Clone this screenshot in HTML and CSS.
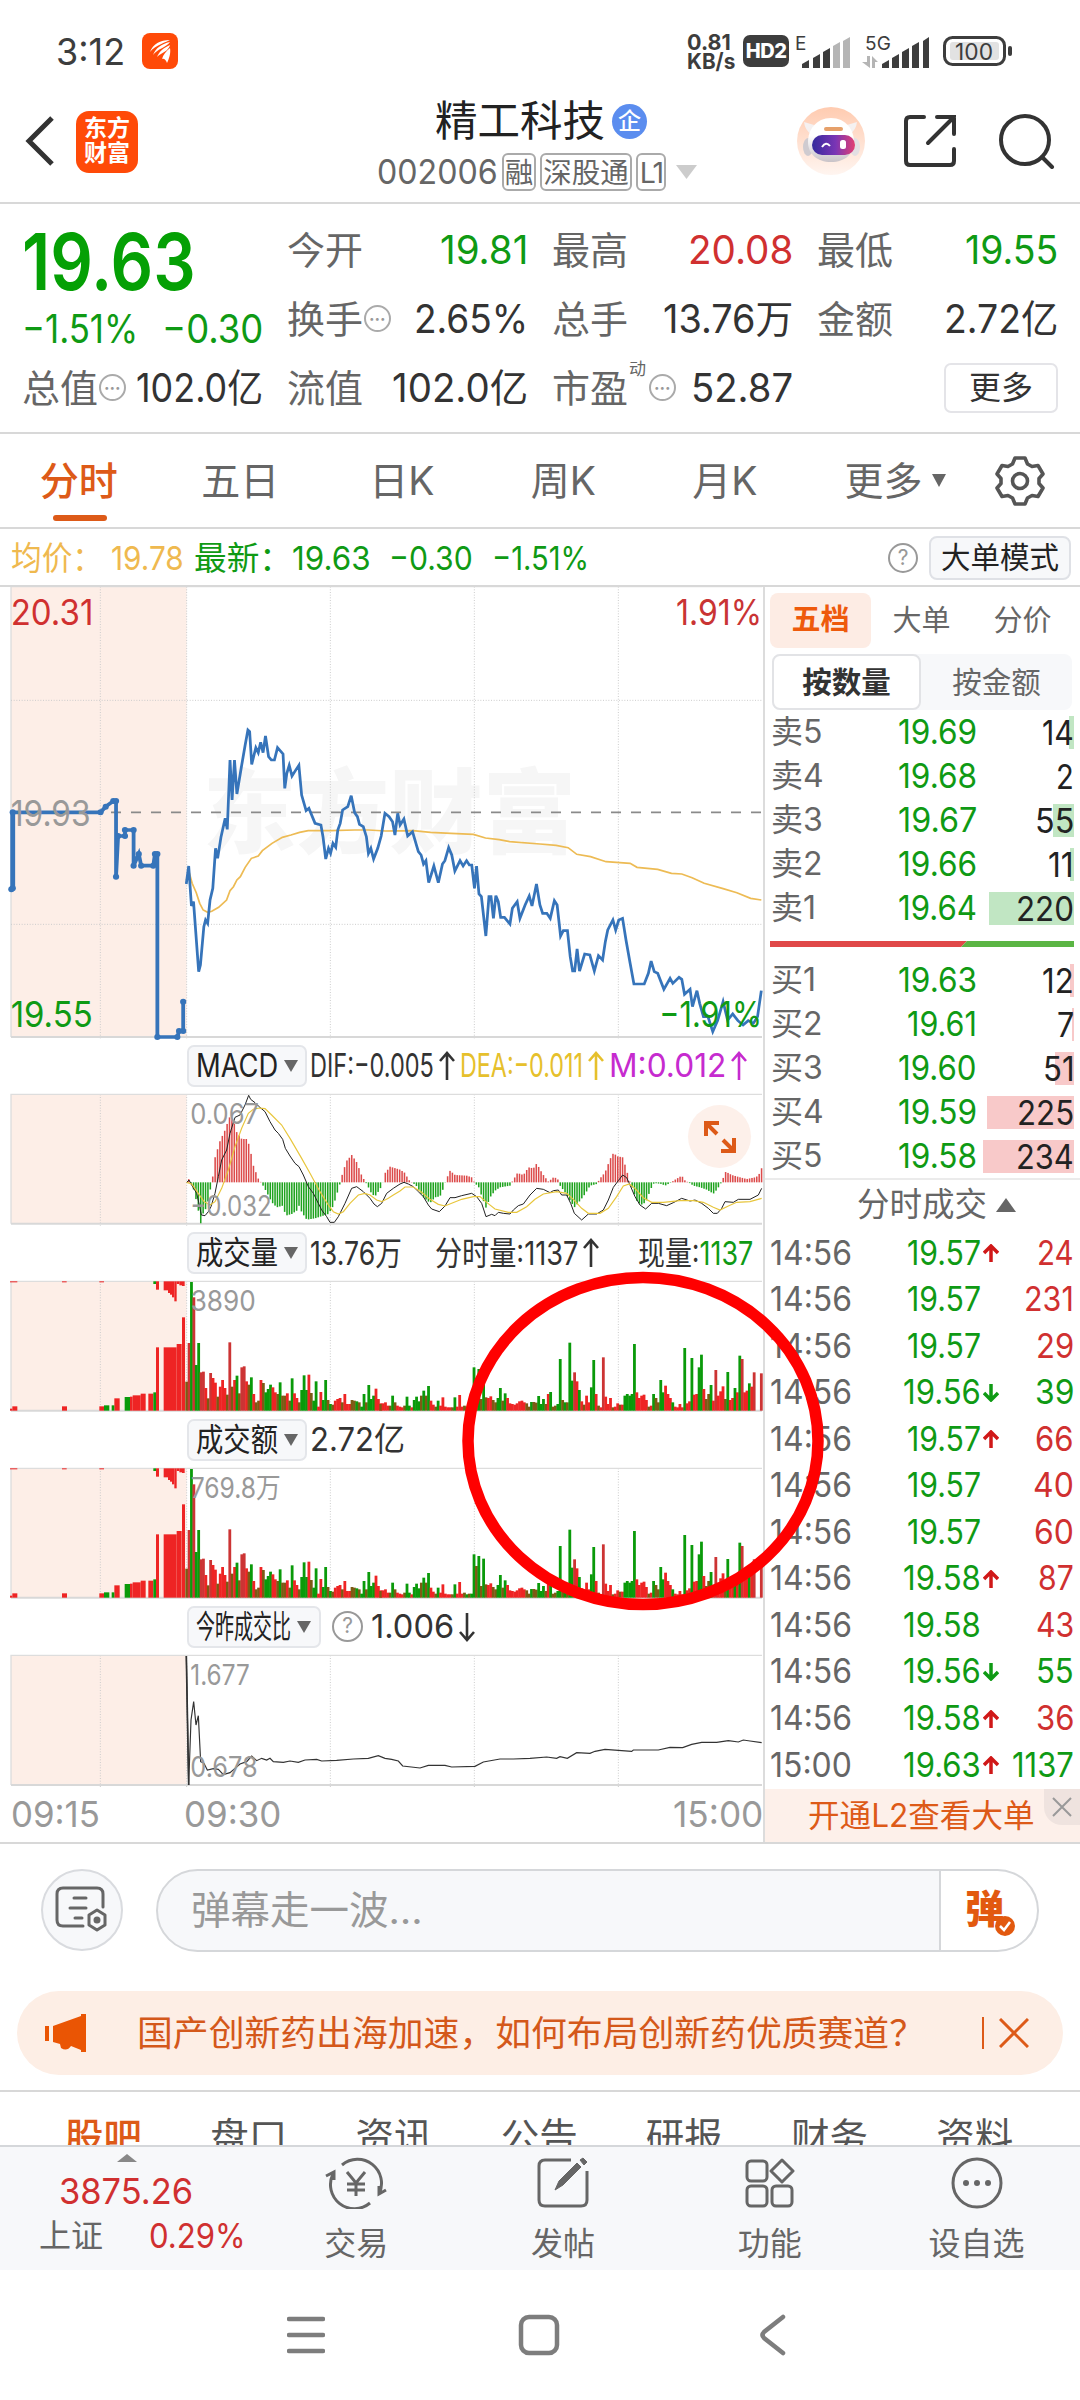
FILE: index.html
```html
<!DOCTYPE html>
<html lang="zh-CN">
<head>
<meta charset="utf-8">
<title>精工科技 002006</title>
<link rel="stylesheet" href="styles.css">
</head>
<body>
<header class="status">
  <span class="clock fit" data-w="69">3:12</span>
  <svg class="app" width="36" height="36" viewBox="0 0 36 36"><rect width="36" height="36" rx="8" fill="#ff4a08"/><path d="M8 19C11 11 18 7 28 7 25 9 13 12 8 19ZM11 22C14 15 19 11 28 9 25 14 15 16 11 22ZM15 24C17 19 21 15 28 12 27 18 19 20 15 24ZM20 26C21 22 24 18 28 15 29 20 27 26 25 30 24 27 22 25 20 26Z" fill="#fff"/></svg>
  <div class="speed"><span class="fit" data-w="44">0.81</span><span class="fit" data-w="48">KB/s</span></div>
  <span class="hd">HD2</span>
  <svg class="signals" width="140" height="44" viewBox="0 0 140 44">
    <text x="0" y="17" font-size="19">E</text><text x="70" y="17" font-size="19" textLength="26">5G</text>
    <g fill="#3d3d3d"><path d="M7 35V31L14 27V35ZM18 35V25L25 21V35ZM28 35V19L35 15V35Z"/><path d="M87 35V31L94 27V35ZM97 35V25L104 21V35ZM107 35V19L114 15V35ZM117 35V13L124 9V35ZM128 35V8L134 4V35Z"/></g>
    <g fill="#b5b5b5"><path d="M38 35V13L45 9V35ZM48 35V8L55 4V35Z"/><path d="M75 35V23H72V29H67L75 35ZM77 35V23L83 29H80V35Z"/></g>
  </svg>
  <svg class="battery" width="70" height="32" viewBox="0 0 70 32"><rect x="1.5" y="1.5" width="60" height="27" rx="8" fill="#fff" stroke="#3d3d3d" stroke-width="3"/><rect x="7" y="6" width="49" height="18" rx="3" fill="#e2e2e2"/><rect x="65" y="10" width="4" height="10" rx="2" fill="#3d3d3d"/><text x="12" y="24" font-size="23" textLength="38" lengthAdjust="spacingAndGlyphs">100</text></svg>
</header>

<nav class="head">
  <svg class="back" width="30" height="52" viewBox="0 0 30 52"><path d="M27 3 4 26 27 49" fill="none" stroke="#333" stroke-width="5"/></svg>
  <div class="logo"><span>东方</span><span>财富</span></div>
  <div class="title">
    <div class="name">精工科技<i>企</i></div>
    <div class="code"><span class="fit" data-w="121">002006</span><b>融</b><b>深股通</b><b>L1</b><svg width="22" height="14" viewBox="0 0 22 14"><path d="M0 0H21L10.500 14Z" fill="#ccc"/></svg></div>
  </div>
  <svg class="robot" width="68" height="68" viewBox="0 0 68 68">
    <defs><linearGradient id="bg" x2="0" y2="1"><stop stop-color="#ffcbb0"/><stop offset="1" stop-color="#fff5f0"/></linearGradient><linearGradient id="visor"><stop stop-color="#342a9c"/><stop offset=".55" stop-color="#7a35b5"/><stop offset="1" stop-color="#e33f72"/></linearGradient><linearGradient id="shell" x2="0" y2="1"><stop offset=".4" stop-color="#fff"/><stop offset="1" stop-color="#c9c3c8"/></linearGradient></defs>
    <circle cx="34" cy="34" r="34" fill="url(#bg)"/><path d="M7 15 17 18 14 27Q8 23 7 15ZM60 15 50 18 53 27Q59 23 60 15Z" fill="#f5f1f1"/>
    <ellipse cx="11" cy="40" rx="5" ry="9" fill="#cfcbd0"/><ellipse cx="58" cy="40" rx="5" ry="9" fill="#e3dfe3"/>
    <path d="M34 11C49 11 57 23 57 35S48 55 34 55 11 47 11 35 19 11 34 11Z" fill="url(#shell)"/>
    <rect x="27" y="20" width="19" height="4" rx="2" fill="#e6a06a"/><rect x="15" y="28" width="43" height="20" rx="10" fill="url(#visor)"/>
    <path d="M25 40Q29 34 33 39" fill="none" stroke="#fff" stroke-width="2"/><rect x="43" y="33" width="6" height="9" rx="2.500" fill="#fff"/>
  </svg>
  <svg class="share" width="54" height="54" viewBox="0 0 54 54" fill="none" stroke="#333" stroke-width="4" stroke-linecap="round"><path d="M21 3H7Q3 3 3 7V47Q3 51 7 51H47Q51 51 51 47V35M34 3H51V20M51 3 25 29"/></svg>
  <svg class="search" width="56" height="56" viewBox="0 0 56 56" fill="none" stroke="#333" stroke-width="4" stroke-linecap="round"><circle cx="26" cy="27" r="24"/><path d="M43 44 53 54"/></svg>
</nav>

<section class="stats">
  <div class="big"><span class="fit" data-w="174">19.63</span></div>
  <div class="cell"><label>今开</label><span class="fit dn" data-w="88">19.81</span></div>
  <div class="cell"><label>最高</label><span class="fit rd" data-w="105">20.08</span></div>
  <div class="cell"><label>最低</label><span class="fit dn" data-w="93">19.55</span></div>
  <div class="cell chg dn"><span class="fit" data-w="116">−1.51%</span><span class="fit" data-w="101">−0.30</span></div>
  <div class="cell"><label>换手<i class="dots">•••</i></label><span class="fit" data-w="114">2.65%</span></div>
  <div class="cell"><label>总手</label><span class="fit" data-w="130">13.76万</span></div>
  <div class="cell"><label>金额</label><span class="fit" data-w="114">2.72亿</span></div>
  <div class="cell"><label>总值<i class="dots">•••</i></label><span class="fit" data-w="127">102.0亿</span></div>
  <div class="cell"><label>流值</label><span class="fit" data-w="136">102.0亿</span></div>
  <div class="cell"><label>市盈<sup>动</sup><i class="dots">•••</i></label><span class="fit" data-w="102">52.87</span></div>
  <div class="cell last"><button>更多</button></div>
</section>

<nav class="periods">
  <span class="on">分时</span><span>五日</span><span>日K</span><span>周K</span><span>月K</span>
  <span class="more">更多<svg width="14" height="13" viewBox="0 0 14 13"><path d="M0 0H14L7 13Z" fill="#666"/></svg></span>
  <svg class="gear" width="50" height="52" viewBox="0 0 50 52" fill="none" stroke="#555" stroke-width="3.600" stroke-linejoin="round"><path d="M20 3H30L32.500 9 37 11.500 43 10.500 48 19 44 23.500V28.500L48 33 43 41.500 37 40.500 32.500 43 30 49H20L17.500 43 13 40.500 7 41.500 2 33 6 28.500V23.500L2 19 7 10.500 13 11.500 17.500 9Z"/><circle cx="25" cy="26" r="7.500"/></svg>
</nav>

<div class="quote">
  <span class="fit avg" data-w="92">均价：</span><span class="fit avg" data-w="73">19.78</span>
  <span class="fit dn latest" data-w="98">最新：</span><span class="fit dn p1" data-w="79">19.63</span><span class="fit dn" data-w="84">−0.30</span><span class="fit dn" data-w="97">−1.51%</span>
  <i class="help">?</i><button>大单模式</button>
</div>

<main class="board">
  <div class="charts">
    <svg id="price" class="plot" width="763" height="454" viewBox="0 0 2289 1362"></svg>
    <div class="ind r1"><button><span class="fit" data-w="82">MACD</span><em></em></button>
      <span class="fit" data-w="124">DIF:−0.005</span><svg class="ar" viewBox="0 0 16 30"><path d="M8 29V2M1 10 8 2 15 10"/></svg>
      <span class="fit yl" data-w="123">DEA:−0.011</span><svg class="ar yl" viewBox="0 0 16 30"><path d="M8 29V2M1 10 8 2 15 10"/></svg>
      <span class="fit mg" data-w="117">M:0.012</span><svg class="ar mg" viewBox="0 0 16 30"><path d="M8 29V2M1 10 8 2 15 10"/></svg></div>
    <svg id="macd" class="plot" width="763" height="133" viewBox="0 0 2289 399"></svg>
    <div class="ind r2"><button><span class="fit" data-w="82">成交量</span><em></em></button>
      <span class="fit" data-w="92">13.76万</span><span class="fit mid" data-w="143">分时量:1137</span><svg class="ar" viewBox="0 0 16 30"><path d="M8 29V2M1 10 8 2 15 10"/></svg>
      <span class="fit now" data-w="115">现量:<u>1137</u></span></div>
    <svg id="volume" class="plot" width="763" height="132" viewBox="0 0 2289 396"></svg>
    <div class="ind r3"><button><span class="fit" data-w="82">成交额</span><em></em></button><span class="fit" data-w="95">2.72亿</span></div>
    <svg id="amount" class="plot" width="763" height="132" viewBox="0 0 2289 396"></svg>
    <div class="ind r3"><button class="wide"><span class="fit" data-w="95">今昨成交比</span><em></em></button><i class="help">?</i><span class="fit" data-w="83">1.006</span><svg class="ar" viewBox="0 0 16 30"><path d="M8 1V28M1 20 8 28 15 20"/></svg></div>
    <svg id="ratio" class="plot" width="763" height="133" viewBox="0 0 2289 399"></svg>
    <div class="axis"><span class="fit" data-w="89">09:15</span><span class="fit" data-w="97">09:30</span><span class="fit end" data-w="90">15:00</span></div>
    <div class="expand"><svg width="32" height="32" viewBox="0 0 32 32" fill="none" stroke="#dd5a18" stroke-width="4"><path d="M2 15V2H15M3 3 13 13M30 17V30H17M29 29 19 19"/></svg></div>
  </div>

  <aside class="book">
    <div class="tabs"><b>五档</b><span>大单</span><span>分价</span></div>
    <div class="seg"><b>按数量</b><span>按金额</span></div>
    <div id="asks"></div>
    <svg class="ratio-bar" width="304" height="6" viewBox="0 0 304 6"><path d="M0 0H197L191 6H0Z" fill="#e04848"/><path d="M197 0H304V6H191Z" fill="#5bb544"/></svg>
    <div id="bids"></div>
    <div class="deals-head">分时成交<svg width="20" height="14" viewBox="0 0 20 14"><path d="M0 14 10 0 20 14Z" fill="#666"/></svg></div>
    <div id="deals"></div>
    <div class="promo"><span class="fit" data-w="227">开通L2查看大单</span><i><svg width="20" height="20" viewBox="0 0 20 20"><path d="M1 1 19 19M19 1 1 19" stroke="#999" stroke-width="2"/></svg></i></div>
  </aside>
  <svg class="mark" width="362" height="340" viewBox="0 0 362 340"><ellipse cx="181" cy="170" rx="175" ry="163.500" fill="none" stroke="#f00" stroke-width="11.500"/></svg>
</main>

<div class="chat">
  <div class="round"><svg width="54" height="50" viewBox="0 0 54 50" fill="none" stroke="#666" stroke-width="3" stroke-linecap="round"><path d="M48 22V9Q48 3 42 3H8Q2 3 2 9V35Q2 41 8 41H28M19 13H31M15 23H31M20 33H27"/><path d="M42 25 50 30V40L42 45 34 40V30Z" stroke-linejoin="round"/><circle cx="42" cy="35" r="2" fill="#666"/></svg></div>
  <div class="input"><span class="fit" data-w="232">弹幕走一波…</span></div>
  <div class="send">弹<svg width="20" height="20" viewBox="0 0 20 20"><circle cx="10" cy="10" r="10" fill="#e2590f"/><path d="M5 10 9 14 15 6" fill="none" stroke="#fff" stroke-width="2.500"/></svg></div>
</div>

<div class="notice">
  <svg width="42" height="38" viewBox="0 0 42 38" fill="#ea5504"><path d="M0 12H4V27H0ZM8 12 36 2V0H41V38H36V36L26 32Q22 38 16 34L15 30 8 28Z"/></svg>
  <span class="fit" data-w="788">国产创新药出海加速，如何布局创新药优质赛道？</span>
  <em></em><svg class="x" width="30" height="30" viewBox="0 0 30 30"><path d="M1 1 29 29M29 1 1 29" stroke="#dd5a18" stroke-width="3"/></svg>
</div>

<nav class="sub"><b>股吧</b><span>盘口</span><span>资讯</span><span>公告</span><span>研报</span><span>财务</span><span>资料</span></nav>

<footer class="bar">
  <div class="index"><svg width="20" height="8" viewBox="0 0 20 8"><path d="M0 8 10 0 20 8Z" fill="#888"/></svg><span class="fit rd" data-w="134">3875.26</span><div><label>上证</label><span class="fit rd" data-w="97">0.29%</span></div></div>
  <div class="act"><svg width="62" height="52" viewBox="0 0 62 52"><path d="M17 8A24 24 0 0 1 54 37M45 46A24 24 0 0 1 8 17M1 19 9 15V23M61 33 54 37V29M22 15 31 26 40 15M31 26V39M22 27H40M22 33H40"/></svg>交易</div>
  <div class="act"><svg width="52" height="52" viewBox="0 0 52 52"><path d="M34 3H8Q2 3 2 9V43Q2 49 8 49H44Q50 49 50 43V14"/><path d="M18 33 22 24 40 6 44 10 26 28ZM43 3 46 1 50 5 47 8Z" fill="#666" stroke-width="1"/></svg>发帖</div>
  <div class="act"><svg width="50" height="52" viewBox="0 0 50 52"><rect x="2" y="4" width="20" height="20" rx="4"/><path d="M37 3 48 14 37 25 26 14Z" stroke-linejoin="round"/><rect x="2" y="29" width="20" height="20" rx="4"/><rect x="27" y="29" width="20" height="20" rx="4"/></svg>功能</div>
  <div class="act"><svg width="52" height="52" viewBox="0 0 52 52"><circle cx="26" cy="26" r="24"/><g fill="#666" stroke="none"><circle cx="15" cy="26" r="3"/><circle cx="26" cy="26" r="3"/><circle cx="37" cy="26" r="3"/></g></svg>设自选</div>
</footer>

<div class="system">
  <svg width="38" height="38" viewBox="0 0 38 38"><path d="M2 3H36M2 19H36M2 35H36" stroke-width="4.500" stroke-linecap="round"/></svg>
  <svg width="42" height="42" viewBox="0 0 42 42"><rect x="3" y="3" width="36" height="36" rx="8" stroke-width="4.500"/></svg>
  <svg width="30" height="42" viewBox="0 0 30 42"><path d="M25 3 6 18Q3 21 6 24L25 39" stroke-width="4.500" stroke-linecap="round"/></svg>
</div>
<script src="script.js"></script>
</body>
</html>
```
FILE: styles.css
```css
* { box-sizing: border-box; }
body { margin: 0; width: 1080px; height: 2400px; overflow: hidden; background: #fff; color: #333; font: 400 38px/1 Inter, "Noto Sans CJK SC", sans-serif; }
i, em, u { font-style: normal; text-decoration: none; }
button { font: inherit; line-height: 1; color: inherit; padding: 0; }
svg { display: block; flex: none; }
.fit { display: inline-block; flex: none; white-space: nowrap; transform-origin: 0 50%; }
.dn { color: #0f9a14; }
.rd { color: #d03030; }

.status { height: 102px; padding-left: 56px; display: flex; align-items: center; color: #3d3d3d; }
.clock { font-size: 37px; }
.app { margin-left: 17px; }
.speed { margin-left: 509px; width: 56px; display: flex; flex-direction: column; font-weight: 700; font-size: 22px; line-height: 19px; padding-top: 2px; align-items: flex-start; }
.hd { width: 46px; height: 32px; border-radius: 7px; background: #3d3d3d; color: #fff; font-weight: 800; font-size: 20px; line-height: 32px; text-align: center; letter-spacing: -.5px; }
.signals { margin-left: 6px; margin-top: 7px; fill: #3d3d3d; }
.battery { margin-left: 8px; margin-top: 1px; fill: #3d3d3d; }

.head { height: 102px; border-bottom: 2px solid #d8d8d8; display: flex; padding-left: 25px; }
.back { margin-top: 13px; }
.logo { margin: 9px 0 0 21px; width: 62px; height: 62px; border-radius: 13px; background: #ff4a08; color: #fff; font-weight: 700; font-size: 23px; line-height: 25px; padding-top: 5px; display: flex; flex-direction: column; align-items: center; }
.title { width: 667px; padding-left: 239px; flex: none; }
.name { display: flex; align-items: center; height: 38px; padding-left: 58px; font-size: 42.500px; color: #222; }
.name i { width: 35px; height: 35px; margin-left: 7px; border-radius: 50%; background: #5b8def; color: #fff; font-size: 23px; line-height: 34px; text-align: center; font-weight: 500; }
.code { display: flex; align-items: center; height: 40px; margin-top: 12px; font-size: 34px; color: #666; }
.code b { font-weight: 400; font-size: 28.500px; height: 38px; line-height: 35px; border: 2px solid #aaa; border-radius: 6px; margin-left: 4px; padding: 0 1px; }
.code b:nth-of-type(3) { letter-spacing: -2px; padding: 0 2px; }
.code svg { margin-left: 10px; }
.robot { margin-top: 5px; margin-left: -8px; }
.share { margin: 12px 0 0 38px; }
.search { margin: 11px 0 0 42px; }

.stats { height: 230px; border-bottom: 2px solid #d8d8d8; padding: 11px 0 0 22px; display: grid; grid-template-columns: 241px 241px 241px 241px; column-gap: 24px; grid-template-rows: 69px 69px 69px; }
.big { font-size: 79px; font-weight: 600; color: #05a005; line-height: 69px; padding-top: 12px; }
.cell { display: flex; align-items: center; justify-content: space-between; font-size: 39px; }
.cell label { color: #666; font-size: 38px; display: flex; align-items: center; }
.chg { padding-top: 20px; }
.dots { width: 27px; height: 27px; border: 2px solid #aaa; border-radius: 50%; color: #999; font-size: 9px; line-height: 23px; text-align: center; margin-left: 1px; letter-spacing: .5px; }
.cell sup { font-size: 17px; align-self: flex-start; margin: -8px 0 0 1px; width: 17px; }
.cell sup + .dots { margin-left: 3px; }
.last { justify-content: flex-end; }
.last button { width: 114px; height: 50px; border: 2px solid #e4e4e8; border-radius: 7px; background: #fff; font-size: 32px; }

.periods { height: 95px; border-bottom: 2px solid #d8d8d8; display: flex; align-items: center; position: relative; font-size: 39px; color: #666; }
.periods span { width: 161.500px; white-space: nowrap; text-align: center; }
.periods .more { display: flex; align-items: center; gap: 9px; width: 150px; margin-left: 39px; }
.periods .on { color: #dd5a18; font-weight: 500; margin-left: -2px; }
.periods .on::after { content: ""; position: absolute; left: 53px; bottom: 6px; width: 54px; height: 6px; border-radius: 3px; background: #dd5a18; }

.quote { height: 58px; border-bottom: 2px solid #d8d8d8; display: flex; align-items: center; padding: 2px 9px 0 11px; font-size: 33px; }
.avg { color: #efb94f; }
.avg + .avg { margin-left: 8px; }
.latest { margin-left: 10px; }
.p1 { margin-left: 0; }
.p1 ~ .dn { margin-left: 19px; }
.help { width: 30px; height: 30px; flex: none; border: 2.500px solid #999; border-radius: 50%; color: #999; font-size: 21px; line-height: 26px; text-align: center; }
.quote .help { margin-left: auto; }
.quote button { margin-left: 11px; width: 142px; height: 44px; border: 2px solid #dfe1e6; border-radius: 8px; background: #f7f8fa; font-size: 29.500px; color: #222; }

.board { height: 1257px; border-bottom: 2px solid #d8d8d8; display: grid; grid-template-columns: 763px 317px; position: relative; }
.charts { position: relative; }
.plot { font-family: Inter, "Noto Sans CJK SC", sans-serif; }
.ind { display: flex; align-items: center; padding-left: 187px; font-size: 33px; }
.ind button { width: 120px; height: 42px; margin-right: 3px; padding-left: 7px; border: 2px solid #e4e6ea; border-radius: 7px; background: #f7f8fa; color: #222; font-size: 32px; display: flex; align-items: center; }
.ind button.wide { width: 134px; }
.ind em { margin-left: 6px; border: 7px solid transparent; border-top: 12px solid #666; border-bottom: 0; }
.ind .ar { width: 16px; height: 30px; margin: 0 5px; fill: none; stroke: #333; stroke-width: 2.600; }
.yl { color: #e6c02c; } .ind .ar.yl { stroke: #e6c02c; }
.mg { color: #c62bcf; } .ind .ar.mg { stroke: #c62bcf; }
.r1 { height: 52px; padding-bottom: 3px; }
.r2 { height: 54px; }
.mid { margin-left: 33px; }
.now { margin-left: 34px; }
.now u { color: #0f9a14; }
.r3 { height: 55px; }
.ind .help { margin: 0 8px; width: 31px; height: 31px; }
.axis { height: 54px; display: flex; align-items: center; padding-left: 11px; color: #999; font-size: 36px; }
.axis .fit + .fit { margin-left: 84px; }
.axis .fit.end { margin-left: auto; }
.expand { position: absolute; left: 688px; top: 518px; width: 63px; height: 63px; border-radius: 50%; background: #fdf0ea; display: flex; align-items: center; justify-content: center; }
.mark { position: absolute; left: 462px; top: 684px; }

.book { border-left: 2px solid #dcdcdc; padding-top: 6px; }
.tabs { height: 55px; margin-left: 5px; display: flex; align-items: center; font-size: 29px; color: #666; }
.tabs b { width: 101px; height: 55px; line-height: 54px; border-radius: 8px; background: #fdece4; color: #ee5a0c; font-weight: 700; text-align: center; }
.tabs span { width: 101px; text-align: center; }
.seg { height: 56px; width: 300px; margin: 6px 0 0 7px; background: #f7f8fa; border-radius: 8px; display: flex; font-size: 29.500px; line-height: 52px; text-align: center; color: #666; }
.seg b { width: 149px; border: 2px solid #e2e3e6; border-radius: 8px; background: #fff; color: #333; font-weight: 700; }
.seg span { flex: 1; line-height: 56px; }
.level { height: 44px; display: flex; align-items: center; justify-content: flex-end; padding: 0 6px 0 6px; font-size: 34px; color: #222; }
.level label { color: #666; font-size: 32px; margin-right: auto; }
.level .qty { width: 97px; height: 33px; line-height: 33px; text-align: right; }
.ratio-bar { margin: 11px 0 11px 5px; }
.deals-head { height: 52px; border-top: 2px solid #ebebeb; padding-left: 92px; display: flex; align-items: center; gap: 9px; font-size: 32.500px; color: #666; }
.deal { height: 46.550px; display: flex; align-items: center; padding: 0 6px 0 5px; font-size: 33.500px; }
.deal .t { color: #666; }
.deal .dn.p { margin-left: auto; }
.deal svg { width: 16px; height: 18px; margin-left: 2px; fill: none; stroke-width: 3.500; }
.deal .q { width: 75px; display: flex; justify-content: flex-end; }
.promo { position: absolute; right: 0; bottom: 0; width: 315px; height: 53px; background: #fdf0ea; color: #dd5a18; font-size: 32px; display: flex; align-items: center; padding-left: 43px; }
.promo i { position: absolute; right: 0; top: 0; width: 36px; height: 36px; border-bottom-left-radius: 18px; background: #efe3df; display: flex; align-items: center; justify-content: center; }

.chat { padding: 25px 41px 0; height: 147px; display: flex; align-items: flex-start; }
.round { width: 82px; height: 82px; border: 2px solid #d9dbdf; border-radius: 50%; background: #f7f8fa; display: flex; align-items: center; justify-content: center; }
.input { width: 785px; height: 83px; margin-left: 33px; border: 2px solid #d5d7da; border-radius: 42px 0 0 42px; background: #f7f8fa; color: #999; font-size: 38.500px; line-height: 79px; padding-left: 33px; }
.send { width: 98px; height: 83px; border: 2px solid #d5d7da; border-left: 0; border-radius: 0 42px 42px 0; color: #e2590f; font-weight: 900; font-size: 39px; line-height: 76px; padding-left: 24px; position: relative; }
.send svg { position: absolute; right: 22px; top: 45px; }
.notice { margin: 0 17px 15px; height: 84px; border-radius: 42px; background: #fdeee5; color: #d4581a; font-size: 35px; display: flex; align-items: center; padding-left: 28px; }
.notice .fit { margin-left: 50px; }
.notice em { width: 2px; height: 32px; background: #dd5a18; margin-left: 57px; }
.notice .x { margin-left: 15px; }
.sub { border-top: 2px solid #d8d8d8; height: 55px; overflow: hidden; display: flex; padding: 26px 31px 0; font-size: 38.500px; color: #555; }
.sub b { color: #dd5a18; font-weight: 500; }
.sub > * { width: 145.200px; text-align: center; flex: none; }

.bar { height: 125px; border-top: 2px solid #d5d7da; background: #f7f8fa; display: flex; font-size: 32px; color: #666; }
.index { width: 253px; flex: none; padding-top: 7px; display: flex; flex-direction: column; align-items: center; font-size: 36px; }
.index > .fit { margin-top: 11px; }
.index div { display: flex; align-items: center; gap: 46px; margin: 10px 0 0 39px; font-size: 34px; align-self: flex-start; white-space: nowrap; }
.index label { font-size: 32px; }
.act { width: 206.800px; display: flex; flex-direction: column; align-items: center; padding-top: 10px; gap: 19px; white-space: nowrap; }
.act svg { fill: none; stroke: #666; stroke-width: 3; }
.system { height: 130px; display: flex; align-items: center; padding-left: 287px; stroke: #7d7d7d; }
.system svg { fill: none; }
.system svg:nth-child(2) { margin-left: 193px; }
.system svg:nth-child(3) { margin-left: 198px; }
```
FILE: script.js
```js
/* Squeeze or stretch labels to their column width */
function fitAll() {
  document.querySelectorAll('.fit').forEach(el => {
    const natural = el.offsetWidth, w = +el.dataset.w;
    el.style.transform = `scaleX(${w / natural})`;
    el.style.marginRight = `${w - natural}px`;
  });
}

/* Order book */
const asks = [['卖5','19.69',14,5],['卖4','19.68',2,0],['卖3','19.67',55,21],['卖2','19.66',11,4],['卖1','19.64',220,85]];
const bids = [['买1','19.63',12,4],['买2','19.61',7,2],['买3','19.60',51,19],['买4','19.59',225,87],['买5','19.58',234,91]];
const qtyWidth = {14:32, 2:18, 55:39, 11:26, 220:58, 12:32, 7:17, 51:32, 225:57, 234:58};
const level = color => ([n, p, q, w]) =>
  `<div class="level"><label>${n}</label><span class="fit dn" data-w="${p === '19.61' ? 70 : 79}">${p}</span><span class="qty" style="background:linear-gradient(${color},${color}) right/${w}px 100% no-repeat"><span class="fit" data-w="${qtyWidth[q]}">${q}</span></span></div>`;
document.getElementById('asks').innerHTML = asks.map(level('#c1e6c3')).join('');
document.getElementById('bids').innerHTML = bids.map(level('#f8c9c9')).join('');

/* Deals: time, price, direction, quantity, colour, quantity width */
const deals = [['14:56','19.57','u',24,'rd',37],['14:56','19.57','',231,'rd',50],['14:56','19.57','',29,'rd',38],['14:56','19.56','d',39,'dn',39],['14:56','19.57','u',66,'rd',39],['14:56','19.57','',40,'rd',41],['14:56','19.57','',60,'rd',40],['14:56','19.58','u',87,'rd',36],['14:56','19.58','',43,'rd',38],['14:56','19.56','d',55,'dn',38],['14:56','19.58','u',36,'rd',38],['15:00','19.63','u',1137,'dn',62]];
const arrows = {u: '<path d="M8 18V2M1 9 8 2 15 9" stroke="#d01818"/>', d: '<path d="M8 0V16M1 9 8 16 15 9" stroke="#0f9a14"/>', '': ''};
document.getElementById('deals').innerHTML = deals.map(([t, p, a, q, c, w]) =>
  `<div class="deal"><span class="fit t" data-w="82">${t}</span><span class="fit dn p" data-w="${p === '19.57' ? 74 : 78}">${p}</span><svg viewBox="0 0 16 18">${arrows[a]}</svg><span class="q ${c}"><span class="fit" data-w="${w}">${q}</span></span></div>`).join('');

/* Charts. Units are thirds of a pixel. */
const L = 33, R = 2286, OPEN = 560, COLS = [301, 560, 991, 1423, 1855];
const line = (pts, c, w, extra = '') => `<polyline points="${pts}" fill="none" stroke="${c}" stroke-width="${w}" ${extra}/>`;
const rect = (x, y, w, h, c) => `<rect x="${x}" y="${y}" width="${w}" height="${h}" fill="${c}"/>`;
const label = (x, y, size, c, s, w) => `<text x="${x}" y="${y}" font-size="${size}" fill="${c}" textLength="${w}" lengthAdjust="spacingAndGlyphs">${s}</text>`;
function frame(top, bottom) {
  return rect(L, top, OPEN - L, bottom - top, '#fdeee7') +
    COLS.map(x => line(`${x},${top} ${x},${bottom + 6}`, '#ccc', 3, 'stroke-dasharray="3 5"')).join('') +
    line(`${L},${bottom} ${L},${top} ${R},${top}`, '#ddd', 4) + line(`${L},${bottom} ${R},${bottom}`, '#d8d8d8', 6);
}

const priceLine = '541,912 548,858 556,978 562,965 577,1175 582,1155 592,1040 597,1020 603,1030 610,960 618,925 626,805 632,835 642,770 654,715 660,748 668,540 674,660 681,540 688,642 702,555 712,495 720,450 725,455 731,553 743,503 750,518 757,487 764,518 771,468 780,530 788,540 797,540 806,503 822,522 827,625 833,580 840,556 848,588 856,575 868,556 876,645 889,692 897,685 915,730 932,735 938,770 946,837 954,805 960,820 967,790 975,802 981,750 988,730 995,690 1010,680 1020,647 1030,698 1038,710 1044,733 1055,740 1064,770 1070,820 1077,805 1085,837 1097,805 1107,768 1118,700 1130,710 1140,725 1147,765 1155,700 1162,735 1173,717 1184,768 1198,755 1215,815 1223,825 1230,852 1237,842 1245,908 1260,858 1273,908 1285,852 1292,842 1303,803 1312,825 1321,873 1336,842 1345,858 1355,842 1363,855 1370,855 1378,925 1384,858 1391,942 1398,950 1411,1068 1420,950 1426,950 1433,1015 1440,947 1447,965 1454,1012 1465,1012 1481,1032 1488,985 1502,965 1510,1015 1525,975 1537,948 1545,978 1558,912 1568,975 1576,1000 1588,1000 1598,1015 1610,962 1618,975 1628,1068 1636,1052 1648,1052 1656,1130 1663,1173 1669,1173 1676,1107 1683,1173 1698,1122 1713,1125 1726,1173 1738,1127 1750,1140 1758,1085 1765,1050 1780,1020 1788,1050 1797,1020 1808,1015 1818,1080 1830,1150 1841,1212 1871,1212 1883,1180 1891,1143 1900,1175 1910,1180 1928,1228 1946,1195 1954,1210 1972,1192 1980,1198 1988,1243 2004,1228 2011,1280 2024,1232 2032,1270 2043,1310 2056,1310 2070,1355 2084,1322 2100,1265 2113,1320 2128,1302 2143,1322 2158,1335 2173,1322 2188,1330 2200,1310 2211,1232';
const avgLine = '541,900 550,880 558,910 570,938 580,970 590,990 603,997 615,994 635,982 658,960 668,932 678,920 688,900 698,890 712,862 730,835 750,828 762,812 790,790 820,772 845,765 870,757 895,752 960,752 1030,750 1070,750 1120,753 1200,752 1250,757 1310,760 1375,763 1410,774 1450,779 1480,785 1568,792 1615,796 1650,803 1675,823 1715,830 1760,845 1830,850 1850,862 1910,868 1950,880 1980,882 2010,893 2045,910 2100,926 2140,938 2180,955 2211,960';
const auction = '33,928 37,925 37,697 292,697 307,680 329,663 337,663 337,890 343,768 363,768 363,750 388,750 388,857 403,822 410,857 445,857 450,822 457,822 457,1371 515,1371 520,1353 532,1353 532,1265';
const dots = auction.split(' ').map(p => p.split(',')).map(([x, y]) => `<circle cx="${x}" cy="${y}" r="9" fill="#3674ba"/>`).join('');
document.getElementById('price').innerHTML =
  `<text x="608" y="778" font-size="275" font-weight="900" fill="#f6f6f6" textLength="1120" lengthAdjust="spacingAndGlyphs">东方财富</text>` +
  `<g transform="translate(0 -21)">${frame(20, 1371)}` +
  line(`${L},361 ${R},361`, '#ccc', 3, 'stroke-dasharray="3 5"') + line(`${L},1033 ${R},1033`, '#ccc', 3, 'stroke-dasharray="3 5"') +
  line(`333,697 ${R},697`, '#8a8a8a', 5, 'stroke-dasharray="30 30"') +
  `<g transform="scale(1.033 1)">${line(avgLine, '#edbb54', 5)}${line(priceLine, '#3674ba', 8)}${line(auction, '#3674ba', 11)}${line('37,697 37,925', '#3674ba', 14)}${dots}</g>` +
  label(32, 134, 106, '#d03030', '20.31', 248) + label(32, 737, 106, '#999', '19.93', 240) + label(32, 1340, 106, '#0f9a14', '19.55', 246) +
  label(2028, 134, 106, '#c93434', '1.91%', 258) + label(1978, 1340, 106, '#0f9a14', '−1.91%', 308) + '</g>';

const hist = [[563,8],[567,10],[572,-3],[580,-20],[590,-60],[602,-123],[610,-90],[620,-75],[632,-15],[638,18],[645,75],[660,125],[674,155],[688,195],[700,185],[710,150],[725,130],[740,130],[748,110],[760,50],[775,10],[785,-3],[790,-12],[800,-30],[815,-60],[830,-75],[848,-70],[857,-100],[875,-95],[890,-85],[897,-70],[905,-90],[920,-112],[945,-108],[985,-95],[1000,-70],[1012,-30],[1020,-3],[1028,30],[1040,65],[1055,82],[1070,60],[1085,20],[1095,3],[1105,-15],[1115,-35],[1125,-42],[1140,-20],[1148,-2],[1155,28],[1170,47],[1200,38],[1215,28],[1225,8],[1240,-3],[1250,-12],[1270,-45],[1290,-62],[1305,-45],[1320,-42],[1330,-18],[1338,8],[1350,35],[1365,22],[1400,20],[1415,15],[1425,-4],[1435,-12],[1445,-42],[1458,-77],[1470,-45],[1485,-25],[1500,-15],[1530,-10],[1538,5],[1552,28],[1570,22],[1585,45],[1600,42],[1610,57],[1620,38],[1630,22],[1645,2],[1660,15],[1672,12],[1680,-10],[1695,-30],[1710,-55],[1723,-75],[1740,-55],[1755,-35],[1770,-10],[1790,-5],[1800,12],[1815,30],[1830,70],[1840,88],[1852,78],[1868,75],[1880,35],[1888,5],[1895,-12],[1910,-55],[1922,-68],[1937,-60],[1952,-20],[1962,-2],[1985,-5],[1995,-10],[2010,-2],[2025,8],[2045,20],[2055,5],[2070,-3],[2080,-10],[2100,-15],[2120,-22],[2140,-34],[2152,-20],[2164,0],[2177,32],[2195,22],[2220,15],[2240,10],[2265,15],[2275,20],[2286,46]];
function at(x) {
  for (let i = 1; i < hist.length; i++) if (x <= hist[i][0]) { const [a, u] = hist[i - 1], [b, v] = hist[i]; return u + (v - u) * (x - a) / (b - a); }
  return 46;
}
let bars = '';
for (let i = 0; i < 240; i++) { const x = 566 + i * 7.19, h = at(x); bars += rect(x - 2, h > 0 ? 457 - h : 457, 4.6, Math.abs(h), h > 0 ? '#dc4a4a' : '#1ea31e'); }
const dif = '560,457 567,450 575,465 590,490 598,525 604,555 615,557 625,545 633,530 645,490 655,440 665,390 680,360 690,310 705,262 720,255 735,225 746,196 752,208 765,218 775,228 795,245 810,275 825,300 835,310 848,328 856,355 870,378 885,400 897,410 910,435 925,470 940,490 955,520 965,540 980,560 990,577 1003,577 1015,560 1035,520 1055,475 1070,470 1090,485 1110,505 1122,522 1132,530 1145,520 1160,490 1180,475 1200,462 1212,457 1225,462 1240,470 1255,485 1270,500 1285,525 1295,537 1318,545 1335,528 1350,503 1365,503 1385,497 1415,490 1430,500 1445,520 1458,560 1475,553 1485,557 1495,547 1510,550 1530,552 1540,540 1555,527 1570,522 1590,495 1610,475 1630,478 1650,488 1660,482 1675,480 1685,495 1700,495 1712,520 1723,550 1745,570 1765,552 1790,552 1810,540 1825,510 1840,472 1855,452 1868,435 1880,443 1890,465 1905,500 1920,525 1937,537 1955,520 1975,520 2000,527 2020,518 2045,505 2070,513 2085,510 2105,520 2125,535 2140,550 2152,550 2165,535 2175,515 2200,517 2215,508 2250,508 2275,495 2285,475';
const dea = '560,457 575,462 595,490 612,515 630,525 645,515 665,475 685,420 705,350 725,295 745,250 760,238 778,234 795,236 815,255 845,285 870,325 905,385 930,430 960,485 985,525 1000,545 1015,552 1030,545 1050,520 1075,495 1095,490 1110,495 1130,510 1145,515 1165,505 1180,495 1200,483 1215,471 1240,471 1265,487 1290,508 1315,523 1335,528 1355,520 1385,508 1420,500 1440,500 1460,517 1485,537 1525,547 1550,547 1580,530 1605,508 1630,492 1670,485 1700,490 1720,508 1745,535 1765,550 1800,550 1825,535 1850,500 1870,468 1888,462 1905,475 1930,503 1955,517 1990,517 2040,512 2080,512 2110,517 2140,532 2160,540 2185,528 2210,517 2250,515 2285,505';
document.getElementById('macd').innerHTML = `<g transform="translate(0 -189)">${frame(193, 581)}` + bars + line(dif, '#222', 3) + line(dea, '#e8c63c', 3.5) +
  label(571, 281, 86, '#999', '0.067', 206) + label(571, 557, 86, '#999', '−0.032', 244) + '</g>';

/* r: red, g: green, b: one behind the other */
const vol = 'b87 r203 g386 r340 g137 g203 r115 r117 r68 b37 r113 r98 r84 b42 r72 r92 r68 b48 r205 b72 r92 g105 b52 r130 r133 r88 b78 g100 r50 b25 b30 r92 b83 g55 g65 g78 r70 r55 b50 g85 b45 b45 r52 b30 g97 r52 r38 b25 g62 g106 g62 r108 b53 g30 g88 r12 r56 g32 g92 b32 g20 b18 r30 r35 r38 b25 r50 r20 r20 b32 b30 g28 b25 g12 g50 b25 g77 g35 g45 r66 r35 r22';
const vol2 = 'b20 r22 r25 r15 b15 g45 b25 r15 r12 r10 b15 g42 g15 r10 g32 g42 g28 b45 g60 b45 g74 r30 r18 b12 g30 r15 r40 r12 r10 r10 b10 g40 r12 r47 r12 b15 g10 b12 g12 g130 b95 g125 b35 g117 b40 r38 r43 b32 b25 g38 g68 b30 g52 r38 r22 r20 r18 r22 r28 r30 r25 b22 b12 g26 b26 b24 g44 g20 g35 b20 r50 g56 b12 b15 g20 g155 b32 g25 b25 g204 g90 r115 r88 g62 r28 b18 r45 r25 g70 g152 r50 b15 r10 r160 r42 r20 r38 b10 r12 r22 b18 r18 g45 g50 g45 g50 g200 r55 r38 r45 r48 r32 b12 r15 g50 b38 b25 g92 g55 r75 r50 r38 g25 r12 r10 r20 r10 g188 r22 r28 g158 r48 r50 g130 g168 r65 b35 b50 g77 r30 r122 r45 r58 r73 b35 g116 r32 r38 g68 r55 g165 r155 r55 r60 g82 r72 r115 r0 r0 r112';
const tint = {r: '#ee2424', g: '#0a9a0a', b: '#7d5a14'};
function volume(labelText, w) {
  const base = 392;
  const draw = (src, x0, pitch) => src.split(' ').map((s, i) => { const h = +s.slice(1); return rect((x0 + i * pitch - 4.2).toFixed(1), base - h, 8.4, h, s[0] === 'r' && h > 110 ? '#cc3434' : tint[s[0]]); }).join('');
  const pre = [[30,22,3],[186,14,3],[298,14,3],[468,9,25],[491,13,27],[504,6,35],[510,6,40],[516,7,48],[523,7,60],[530,8,8],[538,8,12],[546,8,14]].map(([x, w, h]) => rect(x, 4, w, h, '#ee2424')).join('') + rect(460, 4, 8, 8, tint.g) +
    [[30,7,6],[37,15,13],[186,15,13],[298,14,13],[343,16,37],[390,8,42],[398,24,46],[422,15,51],[445,15,51],[468,9,190],[491,39,190],[530,15,200],[546,9,280]].map(([x, w, h]) => rect(x, base - h, w, h, '#ee2424')).join('') +
    [[312,16,16],[335,8,16],[374,16,41],[460,8,55]].map(([x, w, h]) => rect(x, base - h, w, h, tint.g)).join('');
  const n = vol2.split(' ').length;
  return frame(4, base) + pre + draw(vol, 560, 7.19) + draw(vol2, 1142, (2284 - 1142) / (n - 1)) + label(572, 92, 86, '#999', labelText, w);
}
document.getElementById('volume').innerHTML = volume('3890', 195);
document.getElementById('amount').innerHTML = volume('769.8万', 270);

const ratio = '559,768 566,1155 573,960 581,905 588,975 595,947 602,1085 612,1090 622,1110 640,1106 655,1108 670,1124 690,1118 705,1105 720,1092 740,1085 755,1068 770,1082 785,1075 800,1080 810,1075 820,1085 850,1087 870,1083 895,1087 915,1080 950,1078 965,1083 1010,1081 1060,1077 1105,1075 1135,1067 1155,1075 1175,1078 1195,1083 1208,1098 1260,1104 1285,1096 1335,1096 1355,1101 1425,1099 1450,1086 1500,1077 1540,1077 1590,1075 1640,1071 1670,1075 1680,1070 1702,1075 1730,1058 1770,1060 1785,1054 1815,1048 1895,1054 1900,1050 1975,1050 2010,1042 2048,1043 2075,1033 2105,1027 2150,1027 2185,1022 2215,1026 2230,1020 2250,1023 2285,1028';
document.getElementById('ratio').innerHTML = `<g transform="translate(0 -762)">${frame(766, 1155)}` + line(ratio, '#333', 3.5) + line('559,768 566,1155', '#333', 5) +
  label(571, 854, 86, '#999', '1.677', 178) + label(571, 1131, 86, '#999', '0.678', 202) + '</g>';

fitAll();
```
